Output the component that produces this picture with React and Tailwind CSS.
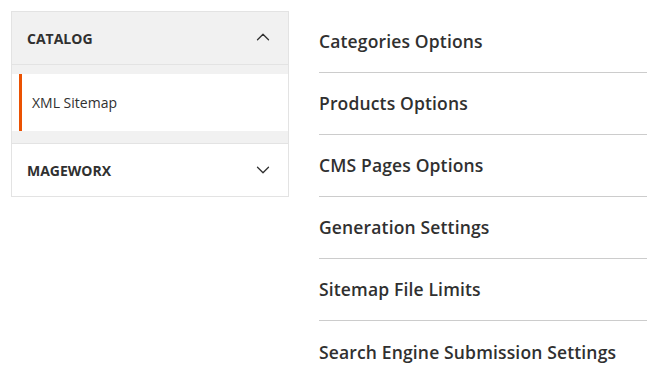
import { ChevronUp, ChevronDown } from "lucide-react";

const SECTIONS = [
  "Categories Options",
  "Products Options",
  "CMS Pages Options",
  "Generation Settings",
  "Sitemap File Limits",
  "Search Engine Submission Settings",
];

const font = { fontFamily: "'Open Sans', 'Liberation Sans', sans-serif" };

export default function App() {
  return (
    <div style={font} className="flex min-h-[387px] w-[647px] bg-white pl-[11px] pt-[11px] text-[#303030]">
      {/* Side nav */}
      <aside className="w-[278px] flex-shrink-0 self-start border border-[#e3e3e3]">
        <div className="flex h-[53px] items-center justify-between border-b border-[#e3e3e3] bg-[#f1f1f1] pl-[15px] pr-[14px]">
          <span className="text-[14px] font-bold uppercase text-[#303030]">Catalog</span>
          <ChevronUp size={22} strokeWidth={1.4} className="-mt-[2px] text-[#303030]" />
        </div>
        <div className="h-[9px] bg-[#f1f1f1]" />
        <div className="pl-[7px]">
          <div className="flex h-[57px] items-center border-l-[3px] border-[#eb5202] bg-white pl-[10px] text-[14px] text-[#303030]">
            XML Sitemap
          </div>
        </div>
        <div className="h-[12px] bg-[#f1f1f1]" />
        <div className="flex h-[53px] items-center justify-between border-t border-[#e3e3e3] pl-[15px] pr-[14px]">
          <span className="text-[14px] font-bold uppercase text-[#303030]">Mageworx</span>
          <ChevronDown size={22} strokeWidth={1.4} className="text-[#303030]" />
        </div>
      </aside>

      {/* Config sections */}
      <main className="ml-[30px] flex-1">
        {SECTIONS.map((s, i) => (
          <div
            key={s}
            className={
              "flex h-[62px] items-center text-[17.5px] font-semibold tracking-[0.15px] text-[#303030] " +
              (i < SECTIONS.length - 1 ? "border-b border-[#cccccc]" : "")
            }
          >
            {s}
          </div>
        ))}
      </main>
    </div>
  );
}
